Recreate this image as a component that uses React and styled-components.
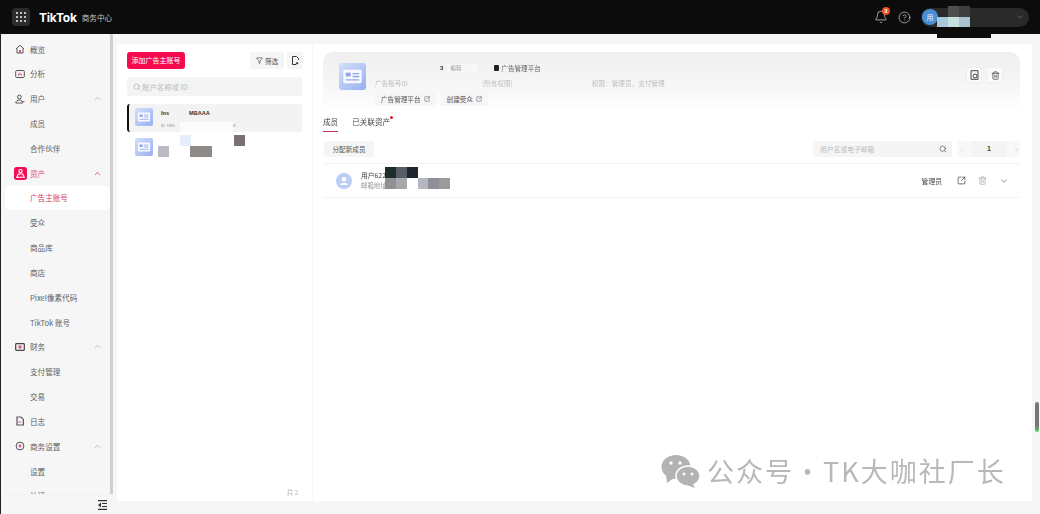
import React from 'react'
import styled, { createGlobalStyle } from 'styled-components'
import { Bell, ChevronDown, ChevronLeft, ChevronRight, ChevronUp, CircleHelp, Filter, Search, SquareArrowOutUpRight, Trash2 } from 'lucide-react'

const Global = createGlobalStyle`
  html, body { margin: 0; padding: 0; background: #f6f6f6; }
  * { box-sizing: border-box; }
  body { font-family: "Noto Sans CJK SC", "Liberation Sans", sans-serif; color: #333; }
`

const Page = styled.div`
  position: relative;
  width: 1040px;
  height: 514px;
  overflow: hidden;
`
const Shot = styled.div`
  width: 1040px;
  height: 514px;
  display: flex;
  flex-direction: column;
  filter: blur(0.45px);
`
const Header = styled.header`
  height: 34px;
  flex: none;
  background: #0c0c0c;
  display: flex;
  align-items: center;
  padding: 0 11px 0 12px;
  color: #fff;
`
const GridButton = styled.div`
  width: 18px;
  height: 18px;
  border-radius: 4px;
  background: #2c2c2c;
  display: grid;
  grid-template-columns: repeat(3, 2.4px);
  gap: 1.4px;
  place-content: center;
  span { width: 2.4px; height: 2.4px; border-radius: 50%; background: #f2f2f2; }
`
const Logo = styled.div`
  margin-left: 9px;
  font: 700 12px "Inter", "Liberation Sans", sans-serif;
  letter-spacing: -0.2px;
`
const LogoSub = styled.div`
  margin-left: 5px;
  font-size: 7.6px;
  color: #c4c4c4;
`
const HeaderRight = styled.div`
  margin-left: auto;
  display: flex;
  align-items: center;
`
const BellWrap = styled.div`
  position: relative;
  display: flex;
  color: #c4c4c4;
  margin-right: 10px;
`
const Badge = styled.span`
  position: absolute;
  top: -3px;
  right: -2px;
  width: 8px;
  height: 8px;
  border-radius: 50%;
  background: #e8501f;
  color: #fff;
  font: 700 6px/8px "Liberation Sans", sans-serif;
  text-align: center;
`
const UserPill = styled.div`
  margin-left: 10px;
  width: 108px;
  height: 19px;
  border-radius: 10px;
  background: #2a2a2a;
  display: flex;
  align-items: center;
  justify-content: space-between;
  padding: 0 5px 0 1px;
  color: #777;
`
const Avatar = styled.div`
  width: 16px;
  height: 16px;
  border-radius: 50%;
  background: #4a8fd4;
  color: #e8f2ff;
  font-size: 7px;
  line-height: 16px;
  text-align: center;
`
const Body = styled.div`
  flex: 1;
  min-height: 0;
  display: flex;
`
const Sidebar = styled.aside`
  width: 113px;
  flex: none;
  display: flex;
  flex-direction: column;
  background: #f6f6f6;
  border-left: 1px solid #222;
  border-right: 3px solid #cfcfcf;
`
const Nav = styled.nav`
  flex: 1;
  min-height: 0;
  overflow: hidden;
  padding-top: 2.6px;
`
const NavRow = styled.div`
  height: 24.83px;
  display: flex;
  align-items: center;
  margin-left: 4px;
  padding-left: ${p => (p.$sub ? '25px' : '0')};
  border-radius: 5px;
  font-size: 7.6px;
  color: ${p => (p.$active ? '#d23c6c' : p.$hot ? '#d9557f' : '#5e5e5e')};
  background: ${p => (p.$active ? '#fff' : 'transparent')};
`
const NavIcon = styled.span`
  width: 25px;
  padding-left: 10px;
  display: flex;
  align-items: center;
`
const NavChevron = styled.span`
  margin-left: auto;
  margin-right: 8px;
  display: flex;
  color: ${p => (p.$active ? '#e0285f' : '#aaa')};
`
const SideFoot = styled.div`
  height: 20px;
  flex: none;
  display: flex;
  align-items: center;
  justify-content: flex-end;
  background: #f7f7f7;
  border-top: 1px solid #f0f0f0;
  margin-right: -3px;
  padding-right: 6px;
  position: relative;
`
const Main = styled.main`
  flex: 1;
  min-width: 0;
  display: flex;
  gap: 1px;
  padding: 10px 8px 13px 4px;
`
const ListPanel = styled.section`
  width: 195px;
  flex: none;
  background: #fff;
  display: flex;
  flex-direction: column;
  padding: 8px 9px 4px 10px;
`
const ListTools = styled.div`
  display: flex;
  align-items: center;
  gap: 3px;
`
const Primary = styled.div`
  width: 58px;
  height: 16.5px;
  border-radius: 3px;
  background: #f5094f;
  color: #fff;
  font-size: 7px;
  line-height: 16.5px;
  text-align: center;
  margin-right: auto;
`
const GreyBtn = styled.div`
  height: 17px;
  width: ${p => p.$w}px;
  background: #f5f5f5;
  border-radius: 2px;
  display: flex;
  align-items: center;
  justify-content: center;
  gap: 2px;
  font-size: 6.6px;
  color: #555;
`
const SearchBox = styled.div`
  height: 19px;
  margin-top: 8px;
  margin-right: 1px;
  background: #f4f4f4;
  border-radius: 2px;
  display: flex;
  align-items: center;
  gap: 1px;
  padding-left: 6px;
  font-size: 7.4px;
  color: #bbb;
`
const AccountRow = styled.div`
  height: 28px;
  margin-right: 1px;
  display: flex;
  gap: 8px;
  padding: ${p => (p.$active ? '4px 0 0 6px' : '6px 0 0 8px')};
  background: ${p => (p.$active ? '#f3f3f3' : 'transparent')};
  border-left: ${p => (p.$active ? '2px solid #111' : '0')};
  border-radius: 3px 0 0 3px;
  margin-top: ${p => (p.$active ? '8px' : '0')};
`
const AccountText = styled.div`
  display: flex;
  flex-direction: column;
  gap: 7px;
  padding-top: 1px;
`
const AccountName = styled.div`
  display: flex;
  gap: 20px;
  font: 700 5.6px/8px "Liberation Sans", sans-serif;
  color: #333;
`
const AccountMeta = styled.div`
  display: flex;
  gap: 53px;
  font: 400 3.6px/5px "Liberation Sans", sans-serif;
  color: #888;
`
const ListFoot = styled.div`
  margin-top: auto;
  align-self: flex-end;
  margin-right: 5px;
  font-size: 6.4px;
  color: #b4b4b4;
`
const DetailPanel = styled.section`
  flex: 1;
  min-width: 0;
  background: #fff;
  padding: 8px 12px 0 10px;
`
const Hero = styled.div`
  height: 60px;
  border-radius: 10px 10px 0 0;
  background: linear-gradient(#efefef, #f6f6f6 55%, #fff);
  display: flex;
  padding: 11px 17px 0 16px;
`
const HeroInfo = styled.div`
  margin-left: 9px;
  width: 320px;
`
const HeroLine = styled.div`
  height: ${p => p.$h}px;
  margin-top: ${p => p.$top || 0}px;
  display: flex;
  align-items: center;
  white-space: nowrap;
  font-size: 6.6px;
  color: #bdbdbd;
`
const HeroName = styled.span`
  margin-left: 65px;
  font: 700 6px "Liberation Sans", sans-serif;
  color: #333;
`
const HeroTag = styled.span`
  margin-left: 4px;
  padding: 0 3px;
  width: 30px;
  background: #f7f7f7;
  color: #999;
  font-size: 5.6px;
`
const HeroPlatform = styled.span`
  margin-left: 17px;
  display: flex;
  align-items: center;
  gap: 2px;
  color: #666;
  font-size: 6.6px;
  i { width: 5px; height: 6px; background: #222; border-radius: 1px; display: block; }
`
const HeroField = styled.span`
  width: ${p => p.$w}px;
  flex: none;
`
const HeroBtns = styled.div`
  display: flex;
  gap: 5px;
  margin-top: 4px;
`
const HeroBtn = styled.div`
  height: 14px;
  padding: 0 6px;
  background: #f6f6f6;
  border-radius: 2px;
  display: flex;
  align-items: center;
  gap: 3px;
  font-size: 6.6px;
  color: #555;
`
const HeroActions = styled.div`
  margin-left: auto;
  display: flex;
  gap: 5px;
  padding-top: 4px;
`
const SquareBtn = styled.div`
  width: 16px;
  height: 16px;
  border: 1px solid #eee;
  background: #fbfbfb;
  display: flex;
  align-items: center;
  justify-content: center;
  color: #444;
`
const Tabs = styled.div`
  display: flex;
  gap: 14px;
  margin-top: 2px;
  height: 19px;
`
const Tab = styled.div`
  position: relative;
  height: 18px;
  font-size: 7.6px;
  line-height: 16px;
  color: #444;
  border-bottom: ${p => (p.$active ? '1.5px solid #b8345c' : '0')};
`
const RedDot = styled.span`
  position: absolute;
  top: 2px;
  right: -3px;
  width: 3px;
  height: 3px;
  border-radius: 50%;
  background: #e0102f;
`
const Toolbar = styled.div`
  display: flex;
  align-items: center;
  margin-top: 8px;
  height: 16px;
`
const AssignBtn = styled.div`
  width: 50px;
  height: 16px;
  margin-left: 1px;
  margin-right: auto;
  background: #f5f5f5;
  border-radius: 2px;
  font-size: 6.6px;
  line-height: 16px;
  text-align: center;
  color: #555;
`
const MemberSearch = styled.div`
  width: 139px;
  height: 16px;
  background: #f5f5f5;
  border-radius: 2px;
  display: flex;
  align-items: center;
  justify-content: space-between;
  padding: 0 5px 0 7px;
  font-size: 6.8px;
  color: #bbb;
  svg { color: #555; }
`
const Pager = styled.div`
  width: 62px;
  height: 16px;
  margin-left: 6px;
  background: #f8f8f8;
  display: flex;
  align-items: center;
  justify-content: space-between;
  color: #ccc;
`
const PageNo = styled.span`
  width: 34px;
  height: 16px;
  background: #f4f4f4;
  color: #444;
  font: 700 7px/16px "Liberation Sans", sans-serif;
  text-align: center;
`
const MemberRow = styled.div`
  margin-top: 6px;
  height: 35px;
  border-top: 1px solid #f3f3f3;
  border-bottom: 1px solid #f3f3f3;
  display: flex;
  align-items: center;
  padding: 0 11px 0 13px;
`
const MemberAvatar = styled.div`
  width: 16px;
  height: 16px;
  border-radius: 50%;
  background: #bccdf5;
  display: flex;
  align-items: center;
  justify-content: center;
`
const MemberText = styled.div`
  margin-left: 9px;
  display: flex;
  flex-direction: column;
  gap: 1px;
`
const MemberName = styled.div`
  font-size: 6.8px;
  line-height: 9px;
  color: #444;
`
const MemberMail = styled.div`
  font-size: 6.4px;
  line-height: 9px;
  color: #999;
`
const MemberRole = styled.div`
  margin-left: auto;
  font-size: 6.8px;
  color: #444;
`
const MemberActions = styled.div`
  margin-left: 15px;
  display: flex;
  align-items: center;
  gap: 12px;
  color: #777;
`
const Mosaic = styled.div.attrs(p => ({
  style: { left: p.$x, top: p.$y, width: p.$w, height: p.$h, background: p.$c },
}))`
  position: absolute;
`
const Watermark = styled.div`
  position: absolute;
  left: 661px;
  top: 450px;
  display: flex;
  align-items: center;
  gap: 7px;
  font-size: 27px;
  line-height: 42px;
  letter-spacing: 2px;
  word-spacing: -8px;
  color: #b8b8b8;
  white-space: nowrap;
`
const ScrollThumb = styled.div`
  position: absolute;
  left: 1035px;
  top: 402px;
  width: 4px;
  height: 30px;
  background: linear-gradient(#777 0 80%, #4cd964);
  border-radius: 2px;
`

const CardIcon = ({ size = 18 }) => (
  <svg width={size} height={size} viewBox="0 0 28 28">
    <defs>
      <linearGradient id="cardFill" x1="0" y1="0" x2="1" y2="1">
        <stop offset="0" stopColor="#d3dffa" />
        <stop offset="1" stopColor="#97b0f2" />
      </linearGradient>
    </defs>
    <rect width="28" height="28" rx="3" fill="url(#cardFill)" />
    <rect x="4.5" y="7" width="19" height="14" rx="1.5" fill="#fff" opacity=".9" />
    <rect x="7" y="10" width="5" height="4" fill="#8fa7ea" />
    <path d="M14 11h7M14 14h7M7 17.5h14" stroke="#8fa7ea" strokeWidth="1.3" />
  </svg>
)

const glyph = { width: 10, height: 10, viewBox: '0 0 10 10', fill: 'none', stroke: '#555', strokeWidth: 1 }
const navIcons = {
  home: (
    <svg {...glyph}>
      <path d="M1 5 5 1.2 9 5M2 4.5V9h6V4.5" />
      <path d="M4 6h2v3H4z" fill="#d9557f" stroke="none" />
    </svg>
  ),
  chart: (
    <svg {...glyph}>
      <rect x=".7" y="1.5" width="8.6" height="7" rx="1" />
      <path d="M3.5 6.500V4.500M5 6.500v-3M6.500 6.500V5" stroke="#d9557f" />
    </svg>
  ),
  user: (
    <svg {...glyph}>
      <circle cx="4.4" cy="3" r="1.9" />
      <path d="M.8 9c0-4 7-4 7 0z" />
      <path d="M6.500 7.500h3" stroke="#d9557f" />
    </svg>
  ),
  asset: (
    <svg width="13" height="13" viewBox="0 0 12 12" style={{ marginLeft: -1.5 }}>
      <rect width="12" height="12" rx="2.5" fill="#f00f57" />
      <circle cx="6" cy="3.8" r="1.5" fill="none" stroke="#fff" />
      <path d="M2.500 9.500h7L8 6.500H4z" fill="none" stroke="#fff" />
    </svg>
  ),
  money: (
    <svg {...glyph}>
      <rect x=".7" y="1.7" width="8.6" height="6.600" rx=".8" stroke="#444" strokeWidth="1.2" />
      <rect x="3.500" y="3.500" width="3" height="3" fill="#d9557f" stroke="none" />
    </svg>
  ),
  log: (
    <svg {...glyph}>
      <path d="M2 1h4l2.400 2.400V9H2z" strokeWidth="1.2" />
      <path d="M3.500 6h3" stroke="#d9557f" />
    </svg>
  ),
  gear: (
    <svg {...glyph}>
      <circle cx="5" cy="5" r="3.900" />
      <circle cx="5" cy="5" r="1.400" fill="#d9557f" stroke="none" />
    </svg>
  ),
}

const navItems = [
  { label: '概览', icon: 'home' },
  { label: '分析', icon: 'chart' },
  { label: '用户', icon: 'user', open: true },
  { label: '成员' },
  { label: '合作伙伴' },
  { label: '资产', icon: 'asset', open: true, hot: true },
  { label: '广告主账号', active: true },
  { label: '受众' },
  { label: '商品库' },
  { label: '商店' },
  { label: 'Pixel像素代码' },
  { label: 'TikTok 账号' },
  { label: '财务', icon: 'money', open: true },
  { label: '支付管理' },
  { label: '交易' },
  { label: '日志', icon: 'log' },
  { label: '商务设置', icon: 'gear', open: true },
  { label: '设置' },
  { label: '认证' },
]

const mosaics = [
  [937, 27, 54, 11, '#0c0c0c'],
  [937, 17, 11, 10, '#a9c8dd'],
  [948, 6, 11, 11, '#4e4e4e'],
  [948, 17, 11, 10, '#c8dfe2'],
  [959, 6, 11, 11, '#3e3e3e'],
  [959, 17, 11, 10, '#a8c2d0'],
  [180, 122, 53, 10, '#fbfbfc'],
  [180, 135, 11, 11, '#e6edfb'],
  [234, 135, 11, 11, '#7a7172'],
  [158, 146, 11, 11, '#b9bcc2'],
  [190, 146, 22, 11, '#8d8a88'],
  [385, 167, 11, 11, '#1c2e2c'],
  [396, 167, 11, 11, '#555d66'],
  [407, 167, 11, 11, '#20262f'],
  [385, 178, 11, 11, '#8f9290'],
  [396, 178, 11, 11, '#a5a9ad'],
  [418, 178, 10, 11, '#b4b7bf'],
  [428, 178, 11, 11, '#8e8f98'],
  [439, 178, 11, 11, '#9b9b9b'],
]

export default function App() {
  return (
    <Page>
      <Global />
      <Shot>
        <Header>
          <GridButton>
            {Array.from({ length: 9 }, (_, i) => <span key={i} />)}
          </GridButton>
          <Logo>TikTok</Logo>
          <LogoSub>商务中心</LogoSub>
          <HeaderRight>
            <BellWrap>
              <Bell size={14} strokeWidth={1.4} />
              <Badge>2</Badge>
            </BellWrap>
            <CircleHelp size={13} strokeWidth={1.4} color="#c4c4c4" />
            <UserPill>
              <Avatar>用</Avatar>
              <ChevronDown size={8} />
            </UserPill>
          </HeaderRight>
        </Header>
        <Body>
          <Sidebar>
            <Nav>
              {navItems.map(item => (
                <NavRow key={item.label} $sub={!item.icon} $active={item.active} $hot={item.hot}>
                  {item.icon && <NavIcon>{navIcons[item.icon]}</NavIcon>}
                  {item.label}
                  {item.open && (
                    <NavChevron $active={item.hot}>
                      <ChevronUp size={9} />
                    </NavChevron>
                  )}
                </NavRow>
              ))}
            </Nav>
            <SideFoot>
              <svg width="9" height="10" viewBox="0 0 9 10" fill="#333">
                <path d="M0 0h9v1.200H0zM4 2.900h5v1.200H4zM4 5.900h5v1.200H4zM0 8.800h9V10H0zM3 2.500v5L0 5z" />
              </svg>
            </SideFoot>
          </Sidebar>
          <Main>
            <ListPanel>
              <ListTools>
                <Primary>添加广告主账号</Primary>
                <GreyBtn $w={34}>
                  <Filter size={7} color="#333" />
                  筛选
                </GreyBtn>
                <GreyBtn $w={16}>
                  <svg width="7" height="9" viewBox="0 0 7 9" fill="none" stroke="#333">
                    <path d="M6.500 4V2.500L4.500.5H.5v8h3.500" />
                    <path d="M5 6v2.500M3.800 7.300h2.500" />
                  </svg>
                </GreyBtn>
              </ListTools>
              <SearchBox>
                <Search size={8} color="#aaa" />
                账户名称或 ID
              </SearchBox>
              <AccountRow $active>
                <CardIcon />
                <AccountText>
                  <AccountName>
                    <span>Ins</span>
                    <span>MBAAA</span>
                  </AccountName>
                  <AccountMeta>
                    <span>ID: 7490</span>
                    <span>2749</span>
                  </AccountMeta>
                </AccountText>
              </AccountRow>
              <AccountRow>
                <CardIcon />
              </AccountRow>
              <ListFoot>共 2</ListFoot>
            </ListPanel>
            <DetailPanel>
              <Hero>
                <CardIcon size={27} />
                <HeroInfo>
                  <HeroLine $h={9}>
                    <HeroName>3</HeroName>
                    <HeroTag>编辑</HeroTag>
                    <HeroPlatform>
                      <i />
                      广告管理平台
                    </HeroPlatform>
                  </HeroLine>
                  <HeroLine $h={11} $top={5}>
                    <HeroField $w={107}>广告账号ID</HeroField>
                    <HeroField $w={110}>(所有权限)</HeroField>
                    <span>权限：管理员，支付管理</span>
                  </HeroLine>
                  <HeroBtns>
                    <HeroBtn>
                      广告管理平台
                      <SquareArrowOutUpRight size={6} />
                    </HeroBtn>
                    <HeroBtn>
                      创建受众
                      <SquareArrowOutUpRight size={6} />
                    </HeroBtn>
                  </HeroBtns>
                </HeroInfo>
                <HeroActions>
                  <SquareBtn>
                    <svg width="9" height="10" viewBox="0 0 9 10" fill="none" stroke="#444">
                      <path d="M1 .7h7v8.600H1z" />
                      <circle cx="5" cy="6" r="2" />
                    </svg>
                  </SquareBtn>
                  <SquareBtn>
                    <Trash2 size={9} />
                  </SquareBtn>
                </HeroActions>
              </Hero>
              <Tabs>
                <Tab $active>成员</Tab>
                <Tab>
                  已关联资产
                  <RedDot />
                </Tab>
              </Tabs>
              <Toolbar>
                <AssignBtn>分配新成员</AssignBtn>
                <MemberSearch>
                  用户名或电子邮箱
                  <Search size={8} />
                </MemberSearch>
                <Pager>
                  <ChevronLeft size={7} />
                  <PageNo>1</PageNo>
                  <ChevronRight size={7} />
                </Pager>
              </Toolbar>
              <MemberRow>
                <MemberAvatar>
                  <svg width="10" height="10" viewBox="0 0 10 10" fill="#fff">
                    <circle cx="5" cy="3.300" r="2.200" />
                    <path d="M1 9c.5-3 7.500-3 8 0z" />
                  </svg>
                </MemberAvatar>
                <MemberText>
                  <MemberName>用户622</MemberName>
                  <MemberMail>邮箱地址</MemberMail>
                </MemberText>
                <MemberRole>管理员</MemberRole>
                <MemberActions>
                  <SquareArrowOutUpRight size={9} color="#444" />
                  <Trash2 size={9} color="#aaa" />
                  <ChevronDown size={10} color="#888" />
                </MemberActions>
              </MemberRow>
            </DetailPanel>
          </Main>
        </Body>
      </Shot>
      {mosaics.map(([x, y, w, h, c]) => (
        <Mosaic key={`${x}-${y}`} $x={x} $y={y} $w={w} $h={h} $c={c} />
      ))}
      <Watermark>
        <svg width="39" height="33" viewBox="0 0 39 33" fill="#b3b3b3">
          <ellipse cx="15" cy="12" rx="14.500" ry="12" />
          <path d="M5 20 6 28 13 23z" />
          <ellipse cx="27" cy="21" rx="12" ry="10" stroke="#fff" strokeWidth="1.500" />
          <path d="M32 29 34 33 26 30z" />
          <circle cx="10" cy="8" r="1.700" fill="#fff" />
          <circle cx="19" cy="8" r="1.700" fill="#fff" />
          <circle cx="23" cy="19" r="1.500" fill="#fff" />
          <circle cx="31" cy="19" r="1.500" fill="#fff" />
        </svg>
        公众号 · TK大咖社厂长
      </Watermark>
      <ScrollThumb />
    </Page>
  )
}
